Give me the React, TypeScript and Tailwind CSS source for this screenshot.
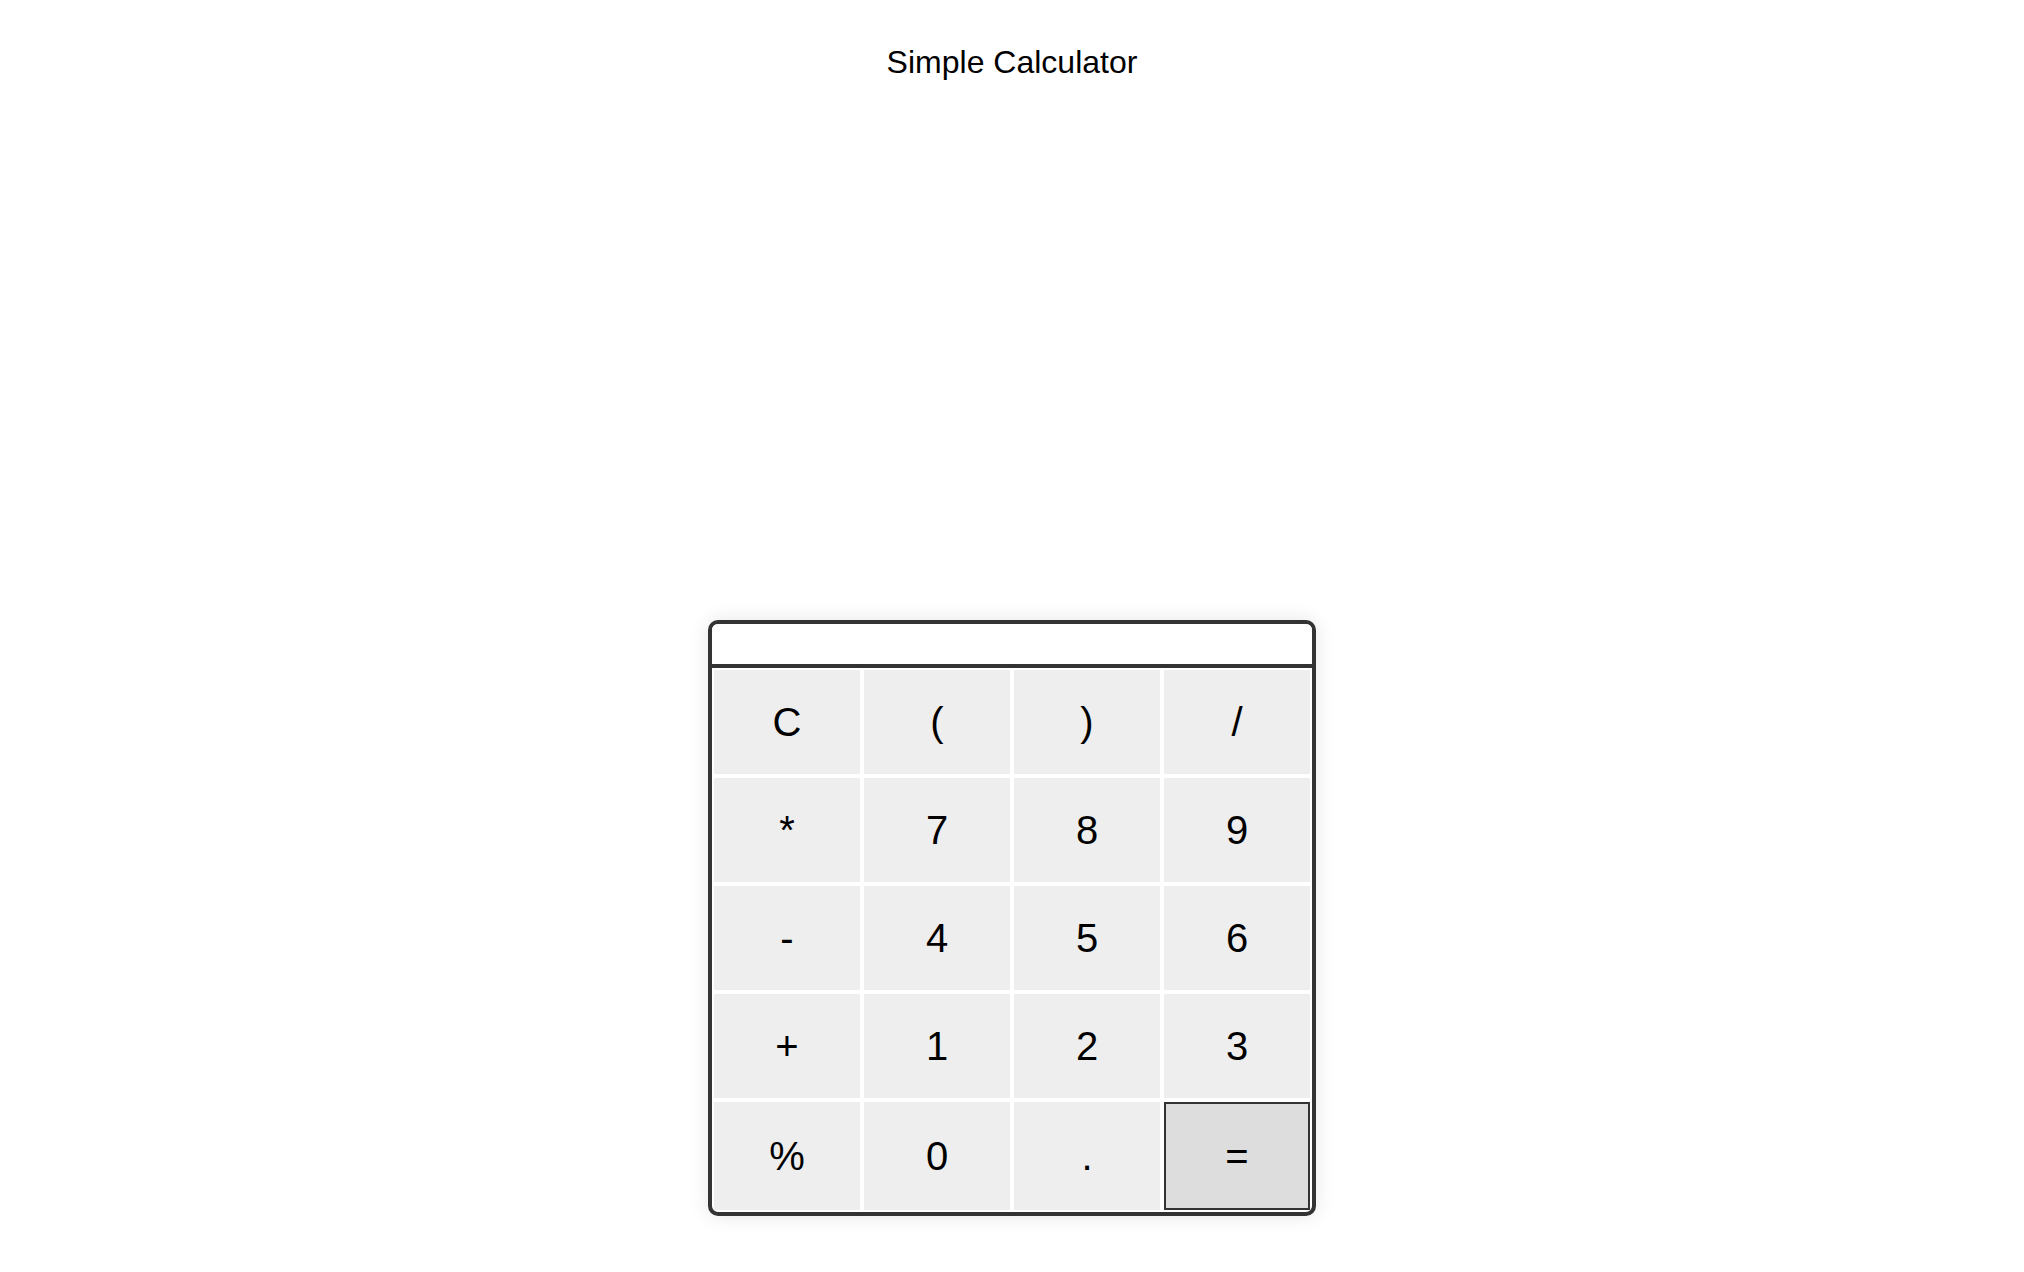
const KEYS = ["C", "(", ")", "/", "*", "7", "8", "9", "-", "4", "5", "6", "+", "1", "2", "3", "%", "0", ".", "="];

export default function App() {
  return (
    <div className="min-h-screen bg-white font-['Liberation_Sans',Arial,sans-serif] text-black">
      <div className="flex flex-col items-center">
        <h1 className="pt-[44px] text-[32px] leading-[37px] font-normal">Simple Calculator</h1>
        <Calculator />
      </div>
    </div>
  );
}

function Calculator() {
  return (
    <div className="mt-[539px] w-[608px] overflow-hidden rounded-[10px] border-4 border-[#333] bg-white shadow-[0_0_20px_rgba(0,0,0,0.1)]">
      <div className="h-[44px] border-b-4 border-[#333] bg-white" />
      <div className="grid grid-cols-4">
        {KEYS.map((k) => (
          <button
            key={k}
            type="button"
            className={
              k === "="
                ? "m-[2px] flex min-h-[108px] items-center justify-center border-2 border-[#333] bg-[#ddd] text-[40px] leading-none"
                : "m-[2px] flex min-h-[104px] items-center justify-center bg-[#eee] text-[40px] leading-none"
            }
          >
            {k}
          </button>
        ))}
      </div>
    </div>
  );
}
